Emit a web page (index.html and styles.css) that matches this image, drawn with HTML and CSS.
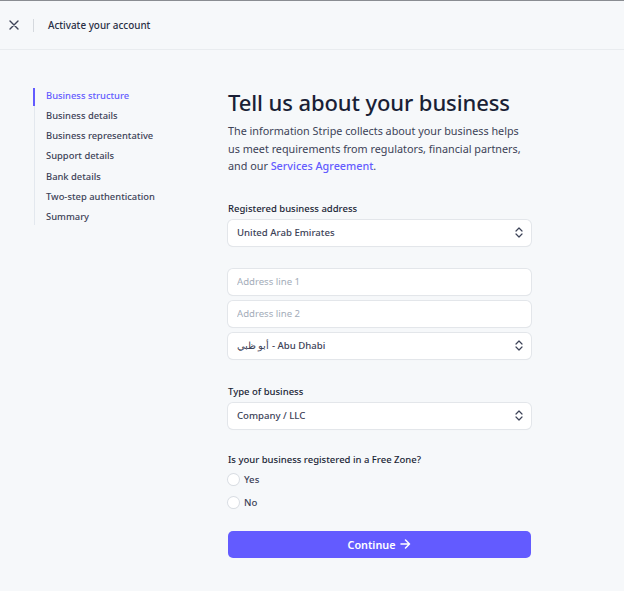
FILE: index.html
```html
<!DOCTYPE html>
<html>
<head>
  <title>Activate your account</title>
  <link rel="stylesheet" href="styles.css">
</head>
<body>
  <header class="topbar">
    <button class="close-btn" aria-label="Close">
      <svg width="10" height="10" viewBox="0 0 10 10"><path d="M1 1 L9 9 M9 1 L1 9" stroke="#3c4257" stroke-width="1.4" stroke-linecap="round"/></svg>
    </button>
    <span class="divider"></span>
    <span class="topbar-title">Activate your account</span>
  </header>

  <div class="page">
    <nav class="steps">
      <a class="step active" href="#">Business structure</a>
      <a class="step" href="#">Business details</a>
      <a class="step" href="#">Business representative</a>
      <a class="step" href="#">Support details</a>
      <a class="step" href="#">Bank details</a>
      <a class="step" href="#">Two-step authentication</a>
      <a class="step" href="#">Summary</a>
    </nav>

    <main class="content">
      <h1>Tell us about your business</h1>
      <p class="intro">The information Stripe collects about your business helps us meet requirements from regulators, financial partners, and our <a href="#">Services Agreement</a>.</p>

      <form onsubmit="event.preventDefault()">
        <div class="field">
          <label class="field-label">Registered business address</label>
          <div class="select">
            <span>United Arab Emirates</span>
            <svg class="chevrons" width="8" height="11" viewBox="0 0 8 11"><path d="M1 4 L4 1 L7 4 M1 7 L4 10 L7 7" fill="none" stroke="#3c4257" stroke-width="1.2" stroke-linecap="round" stroke-linejoin="round"/></svg>
          </div>
        </div>

        <div class="field address-group">
          <input type="text" class="input" placeholder="Address line 1">
          <input type="text" class="input" placeholder="Address line 2">
          <div class="select">
            <span><bdi>أبو ظبي</bdi> - Abu Dhabi</span>
            <svg class="chevrons" width="8" height="11" viewBox="0 0 8 11"><path d="M1 4 L4 1 L7 4 M1 7 L4 10 L7 7" fill="none" stroke="#3c4257" stroke-width="1.2" stroke-linecap="round" stroke-linejoin="round"/></svg>
          </div>
        </div>

        <div class="field business-type">
          <label class="field-label">Type of business</label>
          <div class="select">
            <span>Company / LLC</span>
            <svg class="chevrons" width="8" height="11" viewBox="0 0 8 11"><path d="M1 4 L4 1 L7 4 M1 7 L4 10 L7 7" fill="none" stroke="#3c4257" stroke-width="1.2" stroke-linecap="round" stroke-linejoin="round"/></svg>
          </div>
        </div>

        <div class="field radio-group">
          <label class="field-label">Is your business registered in a Free Zone?</label>
          <label class="radio"><span class="radio-dot"></span>Yes</label>
          <label class="radio"><span class="radio-dot"></span>No</label>
        </div>

        <button type="submit" class="continue">Continue
          <svg width="11" height="10" viewBox="0 0 11 10"><path d="M1 5 H9.5 M5.5 1 L9.5 5 L5.5 9" fill="none" stroke="#fff" stroke-width="1.5" stroke-linecap="round" stroke-linejoin="round"/></svg>
        </button>
      </form>
    </main>
  </div>
</body>
</html>
```

FILE: styles.css
```css
body {
  margin: 0;
  background: #f6f8fa;
  font-family: "Noto Sans", "Open Sans", sans-serif;
  color: #1a1f36;
  border-top: 1px solid #8a8d92;
  min-height: 590px;
}

.topbar {
  display: flex;
  align-items: center;
  height: 48px;
  border-bottom: 1px solid #e9ecef;
}

.close-btn {
  background: none;
  border: none;
  padding: 0;
  margin-left: 9px;
  width: 10px;
  height: 10px;
  display: flex;
  cursor: pointer;
}

.divider {
  width: 1px;
  height: 13px;
  background: #d5d9de;
  margin: 0 14px 0 14px;
}

.topbar-title {
  font-size: 9.9px;
  font-weight: 500;
  color: #2a2f45;
}

.page {
  display: flex;
  padding-top: 38px;
}

.steps {
  display: flex;
  flex-direction: column;
  margin-left: 34px;
  width: 193px;
  border-left: 1px solid #e3e8ee;
  height: 137px;
}

.step {
  display: block;
  padding-left: 11px;
  font-size: 9.4px;
  font-weight: 500;
  line-height: 20.2px;
  color: #3c4257;
  text-decoration: none;
  white-space: nowrap;
}

.step.active {
  color: #635bff;
  border-left: 2px solid #635bff;
  margin-left: -2px;
  line-height: 14px;
  padding-top: 1px;
  padding-bottom: 3px;
}

.content {
  width: 303px;
}

h1 {
  margin: -1px 0 0;
  font-size: 22px;
  font-weight: 500;
  line-height: 30px;
  color: #1a1f36;
  letter-spacing: -0.1px;
}

.intro {
  margin: 5px 0 0;
  max-width: 296px;
  font-size: 10.8px;
  line-height: 17.5px;
  color: #3c4257;
}

.intro a {
  color: #635bff;
  font-weight: 500;
  text-decoration: none;
}

form {
  margin-top: 26px;
}

.field {
  display: flex;
  flex-direction: column;
  gap: 4px;
}

.field-label {
  font-size: 9.5px;
  font-weight: 500;
  color: #1a1f36;
  line-height: 15px;
}

.select,
.input {
  box-sizing: border-box;
  height: 26px;
  background: #fff;
  border: none;
  border-radius: 5px;
  box-shadow: 0 0 0 1px #e3e6ea, 0 1px 1px rgba(0, 0, 0, 0.07);
  font-family: inherit;
  font-size: 9.6px;
  color: #3c4257;
  padding: 0 9px;
}

.select {
  display: flex;
  align-items: center;
  justify-content: space-between;
  font-weight: 500;
}

.chevrons {
  margin-right: -1px;
}

.input::placeholder {
  color: #a3acb9;
}

.address-group {
  gap: 6px;
  margin-top: 23px;
  margin-bottom: 25px;
}

.business-type {
  margin-bottom: 23px;
}

.radio-group .radio + .radio {
  margin-top: 2px;
}

.radio {
  display: flex;
  align-items: center;
  gap: 5px;
  font-size: 9.6px;
  font-weight: 500;
  color: #3c4257;
  height: 17px;
}

.radio-dot {
  width: 11px;
  height: 11px;
  border-radius: 50%;
  background: #fff;
  box-shadow: 0 0 0 1px #d9dde3, 0 1px 1px rgba(0, 0, 0, 0.06);
}

.continue {
  display: flex;
  align-items: center;
  justify-content: center;
  gap: 5px;
  width: 100%;
  height: 27px;
  margin-top: 20px;
  background: #635bff;
  color: #fff;
  border: none;
  border-radius: 5px;
  font-family: inherit;
  font-size: 10.8px;
  font-weight: 600;
  cursor: pointer;
}
```
